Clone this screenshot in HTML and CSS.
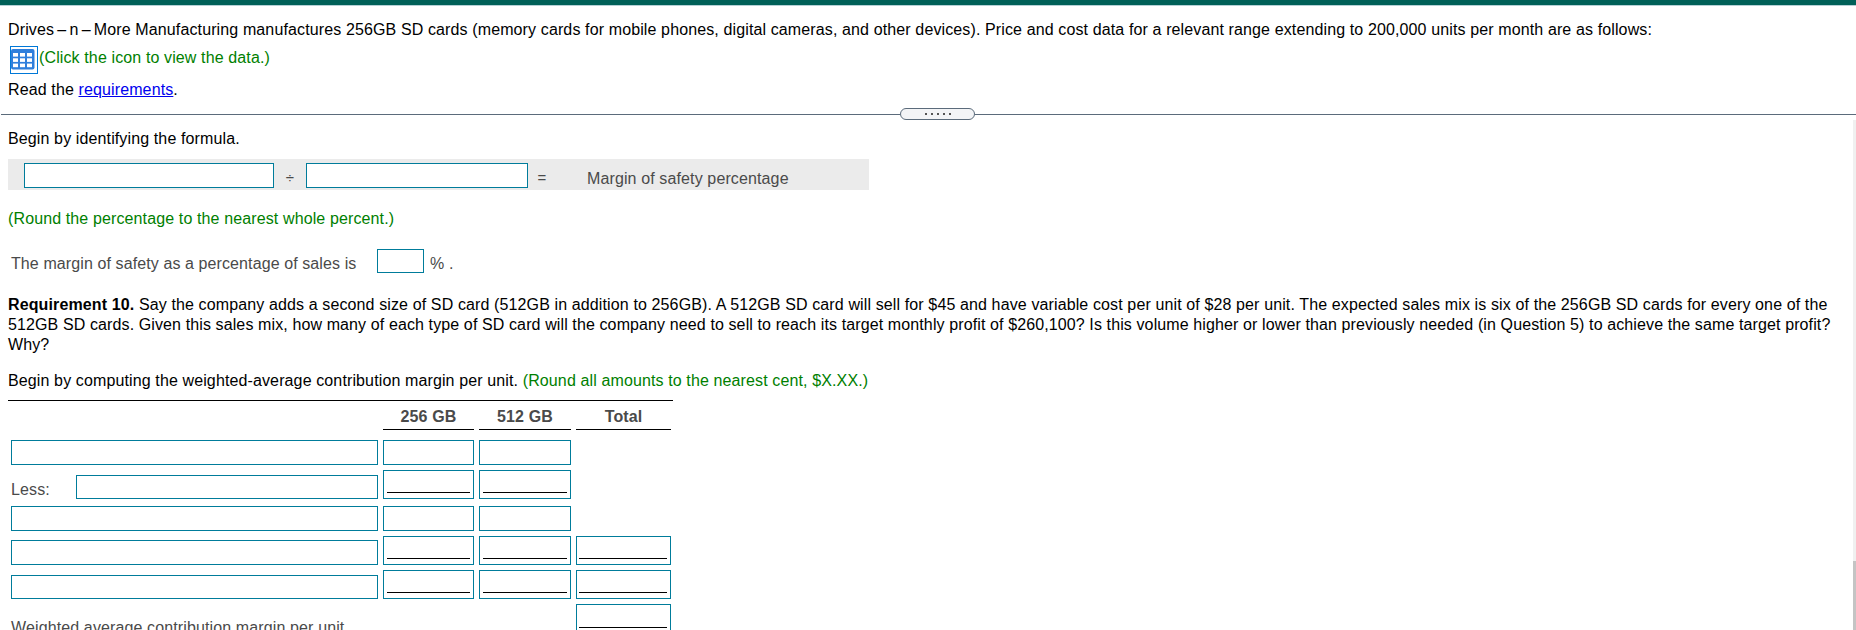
FILE: index.html
```
<!DOCTYPE html>
<html lang="en">
<head>
    <meta charset="UTF-8">
    <meta name="viewport" content="width=device-width, initial-scale=1.0">
    <title>Margin of Safety</title>
    <link rel="stylesheet" href="styles.css">
</head>
<body>
    <div class="top-bar"></div>

    <div class="intro">
        <p class="problem">Drives<span class="dash"> – n – </span>More Manufacturing manufactures 256GB SD cards (memory cards for mobile phones, digital cameras, and other devices). Price and cost data for a relevant range extending to 200,000 units per month are as follows:</p>
        <div class="data-link">
            <span class="data-icon">
                <svg width="26" height="26" viewBox="0 0 26 26">
                    <rect x="0" y="2" width="23.5" height="20.5" rx="2" fill="#2f7fdc"/>
                    <g fill="#fff">
                        <rect x="2" y="6" width="5" height="3.6"/><rect x="9" y="6" width="5" height="3.6"/><rect x="16" y="6" width="5" height="3.6"/>
                        <rect x="2" y="11.3" width="5" height="3.6"/><rect x="9" y="11.3" width="5" height="3.6"/><rect x="16" y="11.3" width="5" height="3.6"/>
                        <rect x="2" y="16.6" width="5" height="3.6"/><rect x="9" y="16.6" width="5" height="3.6"/><rect x="16" y="16.6" width="5" height="3.6"/>
                    </g>
                </svg>
            </span>
            <span class="hint">(Click the icon to view the data.)</span>
        </div>
        <p class="read">Read the <a href="#">requirements</a>.</p>
    </div>

    <div class="divider">
        <span class="line left"></span>
        <span class="handle"><i></i><i></i><i></i><i></i><i></i></span>
        <span class="line"></span>
    </div>

    <div class="work">
        <div class="content">
            <p class="begin">Begin by identifying the formula.</p>
            <div class="formula">
                <div class="box numerator"></div>
                <span class="op">÷</span>
                <div class="box denominator"></div>
                <span class="op equals">=</span>
                <span class="result">Margin of safety percentage</span>
            </div>
            <p class="hint round">(Round the percentage to the nearest whole percent.)</p>
            <div class="answer">
                <span class="answer-label">The margin of safety as a percentage of sales is</span>
                <div class="box percent"></div>
                <span class="answer-unit">% .</span>
            </div>
            <p class="requirement"><b>Requirement 10.</b> Say the company adds a second size of SD card (512GB in addition to 256GB). A 512GB SD card will sell for $45 and have variable cost per unit of $28 per unit. The expected sales mix is six of the 256GB SD cards for every one of the<br><span class="mix">512GB SD cards. Given this sales mix, how many of each type of SD card will the company need to sell to reach its target monthly profit of $260,100? Is this volume higher or lower than previously needed (in Question 5) to achieve the same target profit?</span><br>Why?</p>
            <p class="compute">Begin by computing the weighted-average contribution margin per unit. <span class="hint">(Round all amounts to the nearest cent, $X.XX.)</span></p>

            <div class="sheet">
                <div></div>
                <div class="head">256 GB</div>
                <div class="head">512 GB</div>
                <div class="head">Total</div>

                <div class="box"></div>
                <div class="box"></div>
                <div class="box"></div>
                <div></div>

                <div class="less"><span>Less:</span><div class="box"></div></div>
                <div class="box sum"></div>
                <div class="box sum"></div>
                <div></div>

                <div class="box"></div>
                <div class="box"></div>
                <div class="box"></div>
                <div></div>

                <div class="box"></div>
                <div class="box sum"></div>
                <div class="box sum"></div>
                <div class="box sum total"></div>

                <div class="box short"></div>
                <div class="box sum"></div>
                <div class="box sum"></div>
                <div class="box sum total"></div>

                <div class="weighted">Weighted average contribution margin per unit</div>
                <div></div>
                <div></div>
                <div class="box sum total double"></div>
            </div>
        </div>
        <div class="scrollbar"><div class="thumb"></div></div>
    </div>
</body>
</html>
```
FILE: styles.css
```
* { box-sizing: border-box; }
body { margin: 0; height: 630px; overflow: hidden; background: #fff; color: #000; font-family: "Liberation Sans", Arial, sans-serif; font-size: 16px; line-height: 20px; letter-spacing: 0.123px; }
p { margin: 0; white-space: nowrap; }
a { color: #0000ee; }
.hint { color: #008000; }

.top-bar { height: 6px; background: #006058; border-bottom: 1px solid #b5d0d6; }
.intro { height: 102px; padding: 14px 0 0 8px; }
.dash { word-spacing: -1.4px; }
.data-link { display: flex; height: 32px; padding: 6px 0 0 2px; }
.data-icon { width: 28px; height: 28px; border: 1px solid #0078d7; }
.data-icon svg { display: block; }
.data-link .hint { margin: 2px 0 0 1px; }
.read { margin-top: 8px; }

.divider { display: flex; align-items: center; height: 12px; padding-left: 1px; }
.line { flex: 1; height: 1px; background: #5b6b7b; }
.line.left { flex: 0 0 899px; }
.handle { display: flex; align-items: center; justify-content: center; gap: 4px; width: 75px; height: 12px; border: 1px solid #5b6b7b; border-radius: 6px; background: #f3f4f6; }
.handle i { width: 2px; height: 2px; background: #555; }

.work { display: flex; height: 510px; }
.content { flex: 1; padding: 9px 0 0 8px; }
.scrollbar { width: 3px; height: 510px; background: #f0f0f0; }
.thumb { height: 70px; margin-top: 441px; background: #c4c4c4; }

.box { height: 25px; border: 1px solid #007c9b; background: #fff; }

.formula { display: flex; width: 861px; height: 31px; margin-top: 10px; padding: 4px 0 0 16px; background: #ebebeb; color: #4a4a4a; }
.numerator { width: 250px; }
.op { width: 32px; padding-top: 5px; font-size: 15px; text-align: center; }
.op.equals { width: 28px; }
.denominator { width: 222px; }
.result { margin-left: 31px; padding-top: 6px; }
.round { margin-top: 19px; }
.answer { display: flex; height: 24px; margin-top: 20px; padding-left: 3px; color: #4a4a4a; }
.answer-label { width: 366px; padding-top: 5px; letter-spacing: 0.1px; }
.percent { width: 47px; height: 24px; }
.answer-unit { margin-left: 6px; padding-top: 5px; }
.requirement { margin-top: 22px; }
.mix { letter-spacing: 0.113px; }
.compute { margin-top: 16px; }

.sheet { display: grid; grid-template-columns: 367px 91px 92px 95px; grid-template-rows: 29px 30px 29px 27px 29px 29px 29px; gap: 5px; width: 665px; margin-top: 9px; padding-left: 3px; border-top: 1px solid #000; color: #4a4a4a; }
.sheet > * { align-self: end; }
.head { height: 29px; padding-top: 6px; border-bottom: 1px solid #000; font-weight: bold; text-align: center; }
.less { display: flex; justify-content: space-between; }
.less .box { width: 302px; height: 24px; }
.less span { height: 24px; padding-top: 5px; }
.short { height: 24px; }
.sum { height: 29px; padding: 21px 3px 0 3px; }
.sum::after { content: ""; display: block; border-top: 1px solid #000; }
.total { padding-left: 2px; padding-right: 3px; }
.double { padding-top: 22px; }
.double::after { height: 3px; border-bottom: 2px solid #4a4a4a; }
.weighted { margin-bottom: -5px; }
```
